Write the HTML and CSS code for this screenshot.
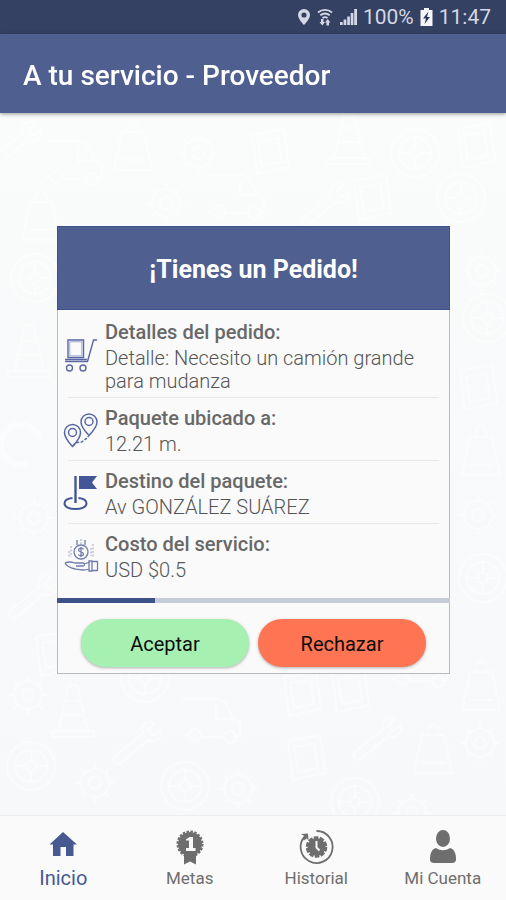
FILE: index.html
```html
<!DOCTYPE html>
<html lang="es">
<head>
<meta charset="utf-8">
<meta name="viewport" content="width=device-width, initial-scale=1">
<title>A tu servicio - Proveedor</title>
<link rel="stylesheet" href="styles.css">
</head>
<body>
<div class="status">
  <svg width="14" height="18" viewBox="0 0 14 18" aria-hidden="true"><path fill="currentColor" fill-rule="evenodd" d="M7 1a6 6 0 0 0-6 6c0 4 6 10 6 10s6-6 6-10a6 6 0 0 0-6-6zm0 3.400a2.600 2.600 0 1 1 0 5.200a2.600 2.600 0 0 1 0-5.200z"/></svg>
  <svg width="16" height="18" viewBox="0 0 16 18" aria-hidden="true"><g fill="none" stroke="currentColor" stroke-width="1.800"><path d="M1 4.500c4-3.500 10-3.500 14 0M3.300 7.300c3-2.300 6.400-2.300 9.400 0M5.500 10c1.600-1.100 3.400-1.100 5 0"/></g><path fill="currentColor" d="M4 11h2.500v3H8l-2.700 3.500L2.500 14H4zM9.500 17.500v-3H8l2.700-3.500 2.800 3.500H12v3z"/></svg>
  <svg width="18" height="18" viewBox="0 0 18 18" aria-hidden="true"><path fill="currentColor" d="M1 14h2.700v3H1zM4.600 11.500h2.700V17H4.600zM8.200 8.500h2.700V17H8.200zM11.700 5h2.700v12h-2.700zM15.200 1H18v16h-2.800z"/></svg>
  <span>100%</span>
  <svg class="battery" width="13" height="18" viewBox="0 0 13 18" aria-hidden="true"><path fill="currentColor" d="M4 0h5v2h3.500v16H.5V2H4z"/><path fill="#26375a" d="M8.500 3.500 3 10.500h3L4.500 16 10 9H7z"/></svg>
  <span>11:47</span>
</div>
<header class="appbar"><h1>A tu servicio - Proveedor</h1></header>
<main class="content">
  <svg class="doodles" viewBox="0 0 506 702" preserveAspectRatio="xMidYMid slice" aria-hidden="true">
    <defs>
      <g id="van"><path d="M2 4h36l8 4 7 16 7 3v14h-6M42 42H22M10 40H3zM36 10v14h16"/><circle cx="15" cy="40" r="6"/><circle cx="50" cy="42" r="6"/></g>
      <g id="wheel"><circle cx="25" cy="25" r="24"/><circle cx="25" cy="25" r="16"/><circle cx="25" cy="25" r="5"/><path d="M25 9v11M25 30v11M9 25h11M30 25h11"/></g>
      <g id="cone"><path d="M0 48h42v6H0zM6 48 17 2h8l11 46M13 18h16M10 32h22"/></g>
      <g id="gear"><circle cx="20" cy="20" r="14"/><circle cx="20" cy="20" r="6"/><path d="M20 0v6M20 34v6M0 20h6M34 20h6M6 6l4 4M30 30l4 4M6 34l4-4M30 10l4-4"/></g>
      <g id="box"><path d="M2 8 34 2l5 38-32 7zM8 14l20-3 4 24-20 4z"/></g>
      <g id="wrench"><path d="M3 35 31 12c-3-9 5-14 12-10l-7 7 5 5 8-5c1 9-5 13-13 10L9 42c-5 3-10-3-6-7z"/></g>
      <g id="lamp"><path d="M10 14h22l8 38H2zM15 14c0-14 12-14 12 0M2 52h38M9 42h24"/></g>
    </defs>
    <g class="strokes">
      <use href="#wrench" x="-8" y="8"/><use href="#van" x="42" y="24"/><use href="#lamp" x="112" y="5"/><use href="#gear" x="178" y="20"/><use href="#box" x="250" y="14"/><use href="#cone" x="328" y="-3"/><use href="#wheel" x="390" y="15"/><use href="#box" x="456" y="8"/>
      <use href="#gear" x="146" y="70"/><use href="#van" x="204" y="58"/><use href="#wrench" x="300" y="70"/><use href="#box" x="352" y="60"/><use href="#wheel" x="436" y="60"/>
      <use href="#lamp" x="20" y="75"/><use href="#wheel" x="10" y="140"/><use href="#gear" x="462" y="138"/><use href="#cone" x="8" y="210"/><use href="#wheel" x="462" y="180"/><use href="#box" x="458" y="250"/>
      <use href="#wrench" x="8" y="462"/><use href="#lamp" x="460" y="310"/><use href="#gear" x="458" y="382"/><use href="#wheel" x="458" y="440"/><use href="#box" x="34" y="516"/><use href="#gear" x="14" y="385"/>
      <use href="#gear" x="8" y="562"/><use href="#cone" x="52" y="570"/><use href="#wheel" x="120" y="540"/><use href="#van" x="180" y="582"/><use href="#box" x="282" y="556"/><use href="#box" x="330" y="552"/><use href="#van" x="388" y="526"/><use href="#lamp" x="460" y="545"/>
      <use href="#wheel" x="6" y="628"/><use href="#gear" x="75" y="650"/><use href="#wrench" x="112" y="608"/><use href="#wheel" x="160" y="648"/><use href="#gear" x="218" y="656"/><use href="#box" x="286" y="620"/><use href="#wrench" x="352" y="604"/><use href="#lamp" x="412" y="608"/><use href="#gear" x="460" y="610"/><use href="#wheel" x="330" y="664"/><use href="#gear" x="392" y="680"/>
      <path class="arc" d="M40 326a20 20 0 1 0-12 24"/>
    </g>
  </svg>
  <section class="card" aria-labelledby="order-title">
    <h2 class="card-title" id="order-title">¡Tienes un Pedido!</h2>
    <dl class="rows">
      <div class="row">
        <svg class="icon" viewBox="0 0 34 34"><g fill="none" stroke="#5a67a6" stroke-width="1.400"><path d="M4 2h15.500v17.500H4zM1 23.500h22.500L29.500 2H33M1 21.500h22"/><path stroke="#a3abd0" stroke-width="1" d="M5.800 3.800h12v14h-12z"/><circle cx="5.500" cy="30" r="3"/><circle cx="19" cy="30" r="3"/></g></svg>
        <div><dt>Detalles del pedido:</dt><dd>Detalle: Necesito un camión grande para mudanza</dd></div>
      </div>
      <div class="row">
        <svg class="icon" viewBox="0 0 34 34"><g fill="none" stroke="#5a67a6" stroke-width="1.500"><path d="M8.500 33.500S.5 25 .5 19.500a8 8 0 0 1 16 0c0 5.500-8 14-8 14zM25 22.500s-8-8.500-8-13.500a8 8 0 0 1 16 0c0 5-8 13.500-8 13.500z"/><circle cx="8.500" cy="19.500" r="4"/><circle cx="25" cy="8.500" r="4"/><path stroke-dasharray="3 1.500" d="M9 33c4-6 7-2 10-5 2-2 4-2 5.500-5"/></g></svg>
        <div><dt>Paquete ubicado a:</dt><dd>12.21 m.</dd></div>
      </div>
      <div class="row">
        <svg class="icon" viewBox="0 0 34 34"><path fill="#435796" d="M15 0h18l-5 6.500 5 6.500H15z"/><path fill="none" stroke="#435796" stroke-width="2.400" d="M11.500 0v27"/><path fill="none" stroke="#435796" stroke-width="2" d="M8.500 22C4 22.500.5 24.500.5 27.500c0 3.500 5 5.500 11 5.500s11-2 11-5.500c0-3-3-5-8-5.500"/></svg>
        <div><dt>Destino del paquete:</dt><dd>Av GONZÁLEZ SUÁREZ</dd></div>
      </div>
      <div class="row">
        <svg class="icon" viewBox="0 0 34 34"><g fill="none" stroke="#707cae" stroke-width="1.300"><circle cx="17" cy="13" r="7"/><path d="M19.500 10.500c-1-2-5-1.500-5 .5 0 2.500 5 1.500 5 4 0 2-4 2.500-5 .5M17 8v10M13 1v5M21 1v5M1 24c4-2 7-1 10 0h8c2 0 2 3 0 3h-7M20 25l6-2M1 24c2 4 6 5 10 6 5 1 9 2 14 0M25 22h3v10h-3zM28 22.500h5.500v9H28"/><path stroke="#b3b9d3" stroke-dasharray="2 1.500" d="M7 7v11M29 5v14M5 12v7M27 9v8M17 0v5"/></g></svg>
        <div><dt>Costo del servicio:</dt><dd>USD $0.5</dd></div>
      </div>
    </dl>
    <progress class="timer" max="100" value="25" aria-label="Tiempo para responder"></progress>
    <div class="actions">
      <button class="btn accept" type="button">Aceptar</button>
      <button class="btn reject" type="button">Rechazar</button>
    </div>
  </section>
</main>
<nav class="tabs">
  <a class="tab active" href="#inicio" aria-current="page">
    <svg viewBox="0 0 36 36"><path fill="currentColor" d="M18 3 4.500 15.500H8V27h7.500v-9h5.500v9h7.500V15.500H32z"/></svg>
    <span>Inicio</span></a>
  <a class="tab" href="#metas">
    <svg viewBox="0 0 36 36"><path fill="currentColor" d="M12 25v10.500l6-3 6 3V25z"/><circle cx="18" cy="15" r="12" fill="currentColor"/><circle cx="18" cy="15" r="12.500" fill="none" stroke="currentColor" stroke-width="2" stroke-dasharray="2.500 1.430"/><path fill="#fafafa" d="M14 10.500 17.500 8H21v11h2.500v3H14v-3h3v-7.500h-3z"/></svg>
    <span>Metas</span></a>
  <a class="tab" href="#historial">
    <svg viewBox="0 0 36 36"><path fill="none" stroke="currentColor" stroke-width="1.800" d="M18.500 2A16 16 0 1 1 7 7"/><path fill="currentColor" d="m3 5 7-.5.5 6.500-2-1.500-2.500 2L4.500 10 7 7.500z"/><circle cx="18.500" cy="18" r="9" fill="currentColor"/><circle cx="18.500" cy="18" r="9.500" fill="none" stroke="currentColor" stroke-width="2.600" stroke-dasharray="4.600 1.370"/><path fill="none" stroke="#fafafa" stroke-width="2" d="M18.500 12v6.500l3 3"/></svg>
    <span>Historial</span></a>
  <a class="tab" href="#cuenta">
    <svg viewBox="0 0 36 36"><ellipse cx="18" cy="9.500" rx="7" ry="8.500" fill="currentColor"/><path fill="currentColor" d="M11 19c4.500 3 9.500 3 14 0 4 1 6 5 6 11 0 3-1.500 4-5 4H10c-3.500 0-5-1-5-4 0-6 2-10 6-11z"/></svg>
    <span>Mi Cuenta</span></a>
</nav>
</body>
</html>
```
FILE: styles.css
```css
* { box-sizing: border-box; }
body {
  margin: 0;
  min-height: 100vh;
  display: flex;
  flex-direction: column;
  background: #fafafa;
  color: #686868;
  font-family: Roboto, "Liberation Sans", sans-serif;
}
h1, h2, dl, dd { margin: 0; }
.status {
  height: 34px;
  padding: 0 15px;
  display: flex;
  align-items: center;
  justify-content: flex-end;
  gap: 6px;
  background: #344163;
  color: #d3d8e4;
  font-size: 21px;
}
.status .battery { color: #f4f6fa; }
.appbar {
  height: 79px;
  padding: 4px 23px 0;
  display: flex;
  align-items: center;
  background: #4f6090;
  color: #fff;
  box-shadow: 0 1px 4px rgba(0, 0, 0, .4);
  z-index: 1;
}
.appbar h1 { font-size: 28px; font-weight: 500; }
.content {
  position: relative;
  flex: 1;
  padding: 113px 56px 0 57px;
  background: linear-gradient(#fafbfb, #f6f8fa);
  overflow: hidden;
}
.doodles { position: absolute; inset: 0; width: 100%; height: 100%; }
.strokes { fill: none; stroke: #fff; stroke-width: 2; opacity: .5; }
.arc { stroke-width: 6; }
.card {
  position: relative;
  border: 1px solid #b9babd;
  border-top: 0;
  background: #fafafa;
}
.card-title {
  margin: 0 -1px;
  padding-top: 2px;
  height: 84px;
  display: flex;
  align-items: center;
  justify-content: center;
  background: #4f6090;
  border: 1px solid #3f5186;
  color: #fff;
  font-size: 25px;
  font-weight: 700;
}
.rows { padding: 2px 10px 12px; }
.row {
  display: flex;
  align-items: center;
  gap: 7px;
  padding: 5px 0 4px;
  border-bottom: 1px solid #e6e7e9;
}
.row:last-child { border-bottom: 0; }
.icon { width: 34px; height: 34px; flex: none; margin-left: -4px; overflow: visible; }
dt { font-size: 20px; line-height: 30px; font-weight: 500; }
dd { font-size: 20px; line-height: 23px; font-weight: 300; color: #555; }
.timer {
  appearance: none;
  display: block;
  width: calc(100% + 2px);
  height: 5px;
  margin: 0 -1px;
  border: 0;
  background: #c7ccdb;
}
.timer::-webkit-progress-bar { background: #c7ccdb; }
.timer::-webkit-progress-value { background: #3f5189; }
.actions { display: flex; gap: 9px; padding: 16px 23px 6px; }
.btn {
  flex: 1;
  height: 48px;
  padding: 2px 0 0;
  border: 0;
  border-radius: 24px;
  color: #0c0c0c;
  font: 20px Roboto, "Liberation Sans", sans-serif;
  box-shadow: 0 1px 3px rgba(0, 0, 0, .3);
}
.accept { background: #a6f0b2; }
.reject { background: #ff7452; }
.tabs {
  height: 85px;
  display: flex;
  background: #fafafa;
  border-top: 1px solid #eeeff0;
}
.tab {
  flex: 1;
  display: flex;
  flex-direction: column;
  align-items: center;
  padding-top: 13px;
  color: #6e6e6e;
  font-size: 17px;
  line-height: 26px;
  text-decoration: none;
}
.tab svg { width: 36px; height: 36px; overflow: visible; }
.tab.active { color: #465991; font-size: 20px; }
```
